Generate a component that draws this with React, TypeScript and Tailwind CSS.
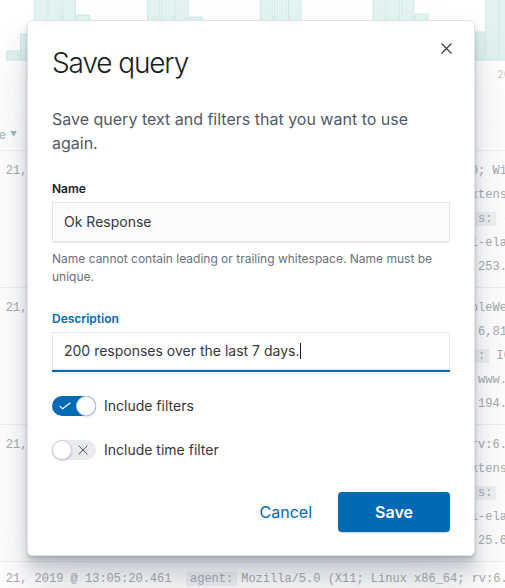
import { ReactNode } from 'react';

// bar tops for the histogram behind the modal (bottom is y=60)
const barTops = [
  51, 34, -2, -2, -2, 15, 30, 45, 50, 42, -2, -2, -2, 17, 35, 48, 52, 38, -2, -2, -2, 28, 45, 50, 44, 32, -2, -2,
  -2, 14, 36, 48, 40, 32, -2, -2,
];

type Line = { pre: string; tail: string; key?: string };

type Doc = { time: string; lines: Line[] };

const docs: Doc[] = [
  {
    time: 'Jun 21, 2019 @ 13:05:31.201',
    lines: [
      { pre: 'agent: Mozilla/4.0 (compatible; MSIE 7.0b', tail: '; Windows NT 6.0)' },
      { pre: 'bytes: 6,810 geo.dest: US geo.src: IN ex', tail: 'tension: css' },
      { pre: 'memory: - ip: 223.87.60.27 geo.coordinate', key: 's:', tail: ' { lat: 38.27' },
      { pre: 'request: /elasticsearch host: www.elastic', tail: '-elastic-elastic.org' },
      { pre: 'timestamp: Jun 21, 2019 ip: 4.81.', tail: '253.219' },
    ],
  },
  {
    time: 'Jun 21, 2019 @ 13:05:27.774',
    lines: [
      { pre: 'agent: Mozilla/5.0 (X11; Linux i686) App', tail: 'leWebKit/534.24' },
      { pre: 'bytes: 3,904 clientip: 194.74.205.0 byt: ', tail: '6,810' },
      { pre: 'geo.dest: US extension: deb geo.src', key: ':', tail: ' IC' },
      { pre: 'url: https://www.elastic.co/downloads/ ', tail: 'www.elastic.co' },
      { pre: 'request: /beats/metricbeat ip: ', tail: '194.74.205.0' },
    ],
  },
  {
    time: 'Jun 21, 2019 @ 13:05:24.114',
    lines: [
      { pre: 'agent: Mozilla/5.0 (X11; Linux x86_64; r', tail: 'v:6.0a1)' },
      { pre: 'bytes: 5,216 geo.dest: CN geo.src: US ex', tail: 'tension: zip' },
      { pre: 'memory: - ip: 25.65.115.43 geo.coordinate', key: 's:', tail: ' { lat: 41.9' },
      { pre: 'request: /kibana/kibana host: www.elastic', tail: '-elastic-elastic.org' },
      { pre: 'timestamp: Jun 21, 2019 clientip: ', tail: '25.65.115.43' },
    ],
  },
];

function fit(s: string) {
  return s.padEnd(40, ' ').slice(0, 40);
}

function Key({ children }: { children: ReactNode }) {
  return <span className="bg-[#f1f2f4] px-1 -ml-1">{children}</span>;
}

function DocRow({ doc }: { doc: Doc }) {
  return (
    <div className="flex h-[137px] border-b border-[#eef0f3] pt-2">
      <div className="w-[209px] shrink-0 leading-6 whitespace-pre">{doc.time}</div>
      <div className="flex flex-col">
        {doc.lines.map((l, i) => (
          <div key={i} className="pl-1 leading-6 whitespace-pre">
            {fit(l.pre)}
            {l.key && <Key>{l.key}</Key>}
            {l.tail}
          </div>
        ))}
      </div>
    </div>
  );
}

function Switch({ on }: { on: boolean }) {
  if (on) {
    return (
      <div className="relative h-5 w-11 shrink-0 rounded-full bg-[#006bb4]">
        <svg className="absolute left-[7px] top-[6px] h-[8px] w-[12px]" viewBox="0 0 12 8" fill="none">
          <path d="M0.6 3.8 L3.6 6.8 L11.4 0.8" stroke="white" strokeWidth="1.1" />
        </svg>
        <div className="absolute right-0 top-0 h-5 w-5 rounded-full border border-[#c8ced8] bg-white shadow-[0_1px_2px_rgba(65,78,101,0.25)]" />
      </div>
    );
  }
  return (
    <div className="relative h-5 w-11 shrink-0 rounded-full bg-[#e9ebef]">
      <svg className="absolute left-[26px] top-[5px] h-[10px] w-[10px]" viewBox="0 0 10 10" fill="none">
        <path d="M0.6 0.6 L9.4 9.4 M9.4 0.6 L0.6 9.4" stroke="#535966" strokeWidth="1" />
      </svg>
      <div className="absolute left-0 top-0 h-5 w-5 rounded-full border border-[#c8ced8] bg-white shadow-[0_1px_2px_rgba(65,78,101,0.25)]" />
    </div>
  );
}

export default function App() {
  return (
    <div className="relative h-[588px] w-[505px] overflow-hidden bg-white font-['Inter',sans-serif]">
      {/* discover page behind the modal */}
      <svg className="block" width="505" height="80" viewBox="0 0 505 80">
        {barTops.map((t, i) => (
          <rect
            key={i}
            x={6.5 + i * 14.1}
            y={t}
            width="12.5"
            height={60 - t}
            fill="#e3f3f1"
            stroke="#cfe9e5"
            strokeWidth="1"
          />
        ))}
        <text x="497" y="78" fontSize="11" fill="#c9ccd1" fontFamily="Inter, sans-serif">
          2019
        </text>
      </svg>
      <div className="-ml-[23px] font-['Liberation_Mono',monospace] text-[12px] text-[#a6aab0]">
        <div className="flex h-[71px] items-end border-b border-[#eef0f3] pb-[6px]">
          <div className="flex w-[209px] items-center gap-[4px] font-['Inter',sans-serif] text-[12px] leading-[18px] text-[#b8bcc2]">
            <span className="font-semibold">Time</span>
            <span className="text-[7px] text-[#9db4cf]">▼</span>
          </div>
          <div className="font-['Inter',sans-serif] text-[12px] font-semibold leading-[18px] text-[#b8bcc2]">_source</div>
        </div>
        {docs.map((d, i) => (
          <DocRow key={i} doc={d} />
        ))}
        <div className="flex pt-[5px]">
          <div className="w-[209px] shrink-0 leading-6 whitespace-pre">Jun 21, 2019 @ 13:05:20.461</div>
          <div className="leading-6 whitespace-pre">
            <span className="bg-[#f1f2f4] px-1">agent:</span>
            <span className="ml-1">Mozilla/5.0 (X11; Linux x86_64; rv:6.0a1) Gecko/20110421 Firefox/6.0a1</span>
          </div>
        </div>
      </div>

      {/* save query modal */}
      <div className="absolute left-[27px] top-[20px] flex w-[448px] flex-col rounded-[5px] border border-[#dfe2e7] bg-white shadow-[0_40px_64px_0_rgba(65,78,101,0.1),0_24px_32px_0_rgba(65,78,101,0.1),0_16px_16px_0_rgba(65,78,101,0.1),0_8px_8px_0_rgba(65,78,101,0.1),0_4px_4px_0_rgba(65,78,101,0.1),0_2px_2px_0_rgba(65,78,101,0.1)]">
        <svg className="absolute right-[22px] top-[22px] h-[11px] w-[11px]" viewBox="0 0 11 11" fill="none">
          <path d="M0.5 0.5 L10.5 10.5 M10.5 0.5 L0.5 10.5" stroke="#343741" strokeWidth="1.1" />
        </svg>
        <div className="px-6 pt-6 pb-[26px]">
          <h2 className="text-[28px] font-light leading-9 tracking-[-0.04em] text-[#1a1c21]">Save query</h2>
        </div>
        <div className="px-6 pb-8">
          <p className="text-base leading-6 text-[#535966]">
            Save query text and filters that you want to use again.
          </p>

          <div className="mt-[25px]">
            <div className="text-xs font-semibold leading-[18px] text-[#1a1c21]">Name</div>
            <div className="mt-1 flex h-10 items-center bg-[#fbfcfd] px-3 text-sm text-[#343741] shadow-[0_1px_1px_-1px_rgba(152,162,179,0.2),0_3px_2px_-2px_rgba(152,162,179,0.2),inset_0_0_0_1px_rgba(16,22,26,0.1)]">
              Ok Response
            </div>
            <div className="mt-2 text-xs leading-[18px] text-[#69707d]">
              Name cannot contain leading or trailing whitespace. Name must be unique.
            </div>
          </div>

          <div className="mt-6">
            <div className="text-xs font-semibold leading-[18px] text-[#006bb4]">Description</div>
            <div className="mt-1 flex h-10 items-center border-b-2 border-[#006bb4] bg-white px-3 text-sm text-[#343741] shadow-[0_1px_1px_-1px_rgba(152,162,179,0.2),0_3px_2px_-2px_rgba(152,162,179,0.2),inset_0_0_0_1px_rgba(16,22,26,0.1)]">
              200 responses over the last 7 days.
              <span className="ml-px inline-block h-4 w-px bg-[#1a1c21]" />
            </div>
          </div>

          <div className="mt-6 flex items-center gap-2">
            <Switch on />
            <span className="text-sm text-[#343741]">Include filters</span>
          </div>
          <div className="mt-6 flex items-center gap-2">
            <Switch on={false} />
            <span className="text-sm text-[#343741]">Include time filter</span>
          </div>
        </div>
        <div className="flex items-center justify-end gap-[14px] px-6 pb-[23px]">
          <button className="h-10 px-3 text-base text-[#006bb4]">Cancel</button>
          <button className="h-10 w-[112px] rounded-[4px] bg-[#006bb4] text-base font-semibold text-white shadow-[0_2px_2px_-1px_rgba(54,97,126,0.3)]">
            Save
          </button>
        </div>
      </div>
    </div>
  );
}
